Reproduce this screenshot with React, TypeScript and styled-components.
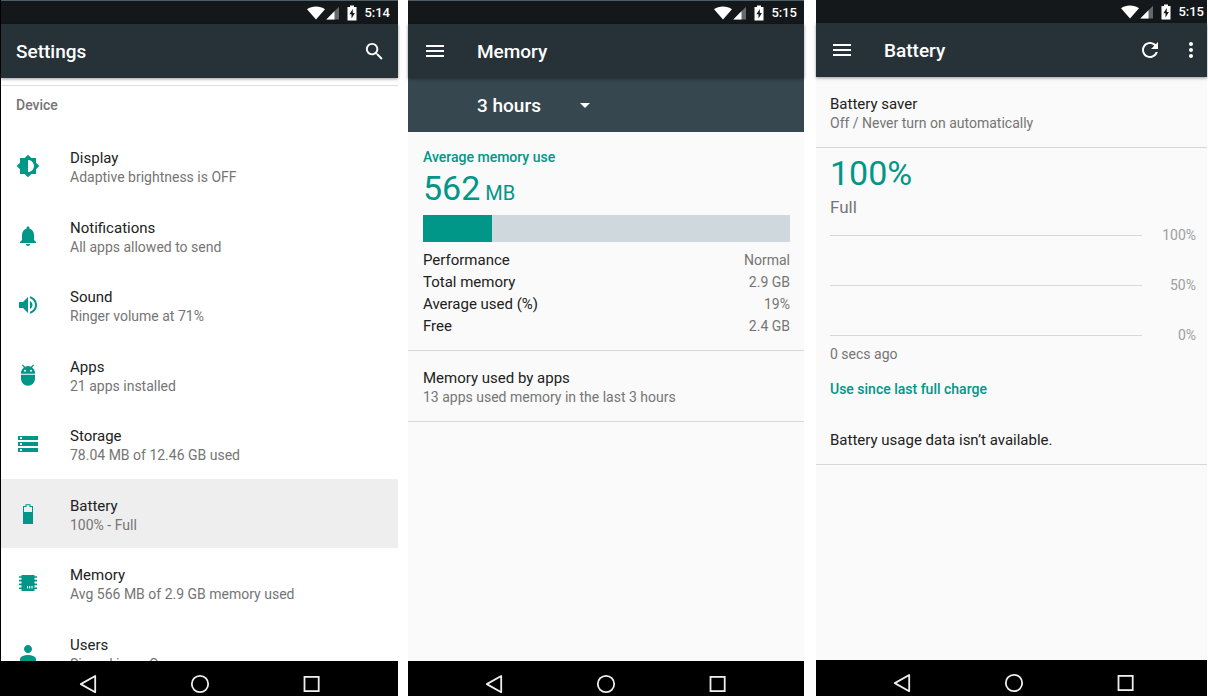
import React from "react";
import styled, { createGlobalStyle } from "styled-components";

const GlobalStyle = createGlobalStyle`
  * { box-sizing: border-box; }
  body {
    margin: 0;
    background: #fff;
    color: #212121;
    font-family: Roboto, "Liberation Sans", sans-serif;
  }
  h1, h2, p { margin: 0; }
`;

const TEAL = "#009688";

const Screens = styled.div`
  display: grid;
  grid-template-columns: 398fr 396fr 394fr;
  column-gap: 10px;
  height: 100vh;
`;

const Phone = styled.section<{ $surface: string }>`
  display: flex;
  flex-direction: column;
  min-width: 0;
  min-height: 0;
  background: ${(p) => p.$surface};
`;

const SettingsPhone = styled(Phone)`
  border-left: 1px solid #000;
`;

const BatteryPhone = styled(Phone)`
  margin: 0 1px 0 2px;
`;

const StatusBar = styled.div<{ $edge?: boolean; $right: number }>`
  display: flex;
  flex: none;
  align-items: center;
  justify-content: flex-end;
  height: ${(p) => (p.$edge ? 24 : 23)}px;
  padding-right: ${(p) => p.$right}px;
  border-top: ${(p) => (p.$edge ? "1px solid #4c5f69" : "none")};
  background: #14181b;
  color: #fff;
`;

const StatusIcon = styled.svg<{ $gap: number }>`
  flex: none;
  margin-right: ${(p) => p.$gap}px;
`;

const Clock = styled.time`
  padding-top: 1px;
  font-size: 13px;
  line-height: 16px;
  font-weight: 500;
`;

const Toolbar = styled.header<{ $left: number; $right: number }>`
  position: relative;
  display: flex;
  flex: none;
  align-items: center;
  height: 54px;
  padding: 0 ${(p) => p.$right}px 0 ${(p) => p.$left}px;
  background: #263238;
  color: #fff;
  box-shadow: 0 1px 3px rgba(0, 0, 0, 0.4);
`;

const Title = styled.h1<{ $indent?: boolean }>`
  flex: 1;
  margin-left: ${(p) => (p.$indent ? 30 : 0)}px;
  padding-top: 2px;
  font-size: 19px;
  line-height: 24px;
  font-weight: 500;
`;

const IconButton = styled.button<{ $gap?: number }>`
  display: flex;
  margin: 0 0 0 ${(p) => p.$gap ?? 0}px;
  padding: 0;
  border: 0;
  background: none;
  color: inherit;
`;

const Content = styled.main`
  flex: 1;
  min-height: 0;
  overflow: hidden;
`;

const NavBar = styled.nav<{ $shift?: boolean }>`
  display: flex;
  flex: none;
  justify-content: center;
  gap: 88px;
  padding: 11px 0 ${(p) => (p.$shift ? 1 : 0)}px ${(p) => (p.$shift ? 4 : 0)}px;
  background: #000;
  color: #eee;
`;

const SectionLabel = styled.h2`
  margin-top: 7px;
  padding: 9px 15px 16px;
  border-top: 1px solid #dcdcdc;
  color: #757575;
  font-size: 14px;
  line-height: 20px;
  font-weight: 500;
`;

const SettingsList = styled.ul`
  display: grid;
  grid-template-rows: repeat(4, 70px 69px);
  margin: 0;
  padding: 0;
  list-style: none;
`;

const SettingLink = styled.a<{ $selected?: boolean }>`
  display: flex;
  align-items: center;
  gap: 30px;
  height: 100%;
  padding: 0 15px;
  background: ${(p) => (p.$selected ? "#eee" : "transparent")};
  color: inherit;
  text-decoration: none;
`;

const SettingIcon = styled.svg`
  flex: none;
  fill: ${TEAL};
`;

const SettingText = styled.div`
  padding-top: 3px;
`;

const Primary = styled.p`
  font-size: 15px;
  line-height: 20px;
`;

const Secondary = styled.p`
  color: #757575;
  font-size: 14px;
  line-height: 19px;
`;

const PeriodBar = styled.div`
  display: flex;
  align-items: center;
  height: 54px;
  padding-left: 69px;
  background: #37474f;
  color: #fff;
`;

const PeriodField = styled.label`
  display: grid;
  grid-template-columns: 113px;
  align-items: center;
  > * { grid-area: 1 / 1; }
  svg { justify-self: end; pointer-events: none; }
`;

const PeriodSelect = styled.select`
  width: 100%;
  padding: 2px 0 0;
  border: 0;
  appearance: none;
  background: none;
  color: inherit;
  font-family: inherit;
  font-size: 19px;
  line-height: 24px;
  font-weight: 500;
`;

const Block = styled.section<{ $pad: string }>`
  padding: ${(p) => p.$pad};
  border-bottom: 1px solid #d8d8d8;
`;

const Accent = styled.h2`
  color: ${TEAL};
  font-size: 14px;
  line-height: 20px;
  font-weight: 500;
`;

const Figure = styled.p`
  color: ${TEAL};
  font-size: 34px;
  line-height: 40px;
`;

const Unit = styled.span`
  font-size: 20px;
  line-height: 20px;
`;

const Meter = styled.div`
  height: 27px;
  margin: 7px 0;
  background: #cfd8dc;
`;

const MeterFill = styled.div`
  height: 100%;
  background: ${TEAL};
`;

const Stats = styled.table`
  width: 100%;
  border-collapse: collapse;
  line-height: 22px;
  th { padding: 0; text-align: left; font-size: 15px; font-weight: 400; }
  td { padding: 0; text-align: right; font-size: 14px; color: #757575; }
`;

const ChargeState = styled.p`
  margin-top: 2px;
  color: #757575;
  font-size: 17px;
  line-height: 24px;
`;

const Chart = styled.div`
  margin-top: 6px;
`;

const ChartRow = styled.div`
  display: flex;
  align-items: center;
  height: 20px;
  color: #9e9e9e;
  font-size: 14px;
  & + & { margin-top: 30px; }
`;

const GridLine = styled.span`
  flex: 1;
  height: 1px;
  background: #d8d8d8;
`;

const GridLabel = styled.span`
  width: 54px;
  text-align: right;
`;

const Spaced = styled.div<{ $top: number }>`
  margin-top: ${(p) => p.$top}px;
`;

function Status({ time, edge, right }: { time: string; edge?: boolean; right: number }) {
  return (
    <StatusBar $edge={edge} $right={right}>
      <StatusIcon $gap={1} width="18" height="14" viewBox="0 0 18 14" fill="#fff">
        <path d="M0 3.2C2.600 1.200 5.600.4 9 .4s6.400.8 9 2.800L9 13.600Z" />
      </StatusIcon>
      <StatusIcon $gap={8} width="13" height="14" viewBox="0 0 13 14" fill="#fff">
        <path d="M13 .8V13.500H.3Z" opacity=".35" />
        <path d="M8.500 5.300V13.500H.3Z" />
      </StatusIcon>
      <StatusIcon $gap={7} width="10" height="16" viewBox="0 0 10 16" fill="#fff">
        <path
          fillRule="evenodd"
          d="M3 .5h4V2h2.500v13.500H.5V2H3ZM5.800 4 2.400 9.200h2.100v4.200l3.400-5.400H5.800Z"
        />
      </StatusIcon>
      <Clock>{time}</Clock>
    </StatusBar>
  );
}

function MenuButton() {
  return (
    <IconButton type="button" aria-label="Open menu">
      <svg width="24" height="24" viewBox="0 0 24 24" fill="currentColor">
        <path d="M3 18h18v-2H3v2zm0-5h18v-2H3v2zm0-7v2h18V6H3z" />
      </svg>
    </IconButton>
  );
}

function SystemNav({ shift }: { shift?: boolean }) {
  const line = { fill: "none", stroke: "currentColor", strokeWidth: 1.8 };
  return (
    <NavBar $shift={shift}>
      <IconButton type="button" aria-label="Back">
        <svg width="24" height="24" viewBox="0 0 24 24" {...line}>
          <path d="M19.200 4v16.200L4.800 12.100Z" strokeLinejoin="round" />
        </svg>
      </IconButton>
      <IconButton type="button" aria-label="Home">
        <svg width="24" height="24" viewBox="0 0 24 24" {...line}>
          <circle cx="12" cy="12" r="8.200" />
        </svg>
      </IconButton>
      <IconButton type="button" aria-label="Recent apps">
        <svg width="24" height="24" viewBox="0 0 24 24" {...line}>
          <rect x="4.500" y="4.900" width="14.200" height="14.200" />
        </svg>
      </IconButton>
    </NavBar>
  );
}

const settings: { title: string; detail: string; icon: string; selected?: boolean }[] = [
  {
    title: "Display",
    detail: "Adaptive brightness is OFF",
    icon: "M20 15.310L23.310 12 20 8.690V4h-4.690L12 .690 8.690 4H4v4.690L.690 12 4 15.310V20h4.690L12 23.310 15.310 20H20v-4.690zM12 18V6c3.310 0 6 2.690 6 6s-2.690 6-6 6z",
  },
  {
    title: "Notifications",
    detail: "All apps allowed to send",
    icon: "M12 22c1.100 0 2-.9 2-2h-4c0 1.100.9 2 2 2zm6-6v-5c0-3.070-1.640-5.640-4.500-6.320V4c0-.83-.67-1.500-1.500-1.500s-1.500.67-1.500 1.500v.68C7.630 5.360 6 7.920 6 11v5l-2 2v1h16v-1l-2-2z",
  },
  {
    title: "Sound",
    detail: "Ringer volume at 71%",
    icon: "M3 9v6h4l5 5V4L7 9H3zm13.500 3c0-1.770-1.020-3.290-2.500-4.030v8.050c1.480-.73 2.500-2.250 2.500-4.020zM14 3.230v2.060c2.890.86 5 3.540 5 6.710s-2.110 5.850-5 6.710v2.060c4.010-.91 7-4.490 7-8.770s-2.990-7.860-7-8.770z",
  },
  {
    title: "Apps",
    detail: "21 apps installed",
    icon: "M5 15.500c0 4.100 3.100 7.200 7 7.200s7-3.100 7-7.200V11.800H5zM16.100 4.400l2-2.200-.9-.8-2.300 2.300a7 7 0 0 0-5.800 0L6.800 1.400l-.9.800 2 2.200A7 7 0 0 0 5 10.200v.5h14v-.5a7 7 0 0 0-2.900-5.800zM9 8.800a1 1 0 1 1 0-2 1 1 0 0 1 0 2zm6 0a1 1 0 1 1 0-2 1 1 0 0 1 0 2z",
  },
  {
    title: "Storage",
    detail: "78.04 MB of 12.46 GB used",
    icon: "M2 20h20v-4H2v4zm2-3h2v2H4v-2zM2 4v4h20V4H2zm4 3H4V5h2v2zm-4 7h20v-4H2v4zm2-3h2v2H4v-2z",
  },
  {
    title: "Battery",
    detail: "100% - Full",
    selected: true,
    icon: "M9.500 2.200h5V4H17v18H7V4h2.500zM10.500 3.200V5H8v5h8V5h-2.500V3.200z",
  },
  {
    title: "Memory",
    detail: "Avg 566 MB of 2.9 GB memory used",
    icon: "M5.500 4h13v1.200H21v1.600h-2.500v2H21v1.600h-2.500v2.200H21v1.600h-2.500v2.200H21V18h-2.500v2h-13v-2H3v-1.600h2.500v-2.200H3v-1.600h2.500v-2.200H3V8.800h2.500v-2H3V5.200h2.500zM11 15v2.500h1V15zM13 15v2.500h1.200V15zM15.400 15v2.500h1.200V15z",
  },
  {
    title: "Users",
    detail: "Signed in as Owner",
    icon: "M12 12c2.210 0 4-1.790 4-4s-1.790-4-4-4-4 1.790-4 4 1.790 4 4 4zm0 2c-2.670 0-8 1.340-8 4v2h16v-2c0-2.660-5.330-4-8-4z",
  },
];

const memoryStats = [
  ["Performance", "Normal"],
  ["Total memory", "2.9 GB"],
  ["Average used (%)", "19%"],
  ["Free", "2.4 GB"],
];

export default function App() {
  return (
    <>
      <GlobalStyle />
      <Screens>
        <SettingsPhone $surface="#fff">
          <Status time="5:14" edge right={8} />
          <Toolbar $left={15} $right={12}>
            <Title>Settings</Title>
            <IconButton type="button" aria-label="Search">
              <svg width="23" height="23" viewBox="0 0 24 24" fill="currentColor">
                <path d="M15.500 14h-.79l-.28-.27C15.410 12.590 16 11.110 16 9.500 16 5.910 13.090 3 9.500 3S3 5.910 3 9.500 5.910 16 9.500 16c1.610 0 3.090-.59 4.230-1.570l.27.28v.79l5 4.990L20.490 19l-4.990-5zm-6 0C7.010 14 5 11.990 5 9.500S7.010 5 9.500 5 14 7.010 14 9.500 11.990 14 9.500 14z" />
              </svg>
            </IconButton>
          </Toolbar>
          <Content>
            <SectionLabel>Device</SectionLabel>
            <SettingsList>
              {settings.map((s) => (
                <li key={s.title}>
                  <SettingLink href="#" $selected={s.selected}>
                    <SettingIcon width="24" height="24" viewBox="0 0 24 24" fillRule="evenodd">
                      <path d={s.icon} />
                    </SettingIcon>
                    <SettingText>
                      <Primary>{s.title}</Primary>
                      <Secondary>{s.detail}</Secondary>
                    </SettingText>
                  </SettingLink>
                </li>
              ))}
            </SettingsList>
          </Content>
          <SystemNav />
        </SettingsPhone>

        <Phone $surface="#fafafa">
          <Status time="5:15" edge right={7} />
          <Toolbar $left={15} $right={12}>
            <MenuButton />
            <Title $indent>Memory</Title>
          </Toolbar>
          <Content>
            <PeriodBar>
              <PeriodField>
                <PeriodSelect aria-label="Time period" defaultValue="3 hours">
                  <option>3 hours</option>
                </PeriodSelect>
                <svg width="10" height="5" viewBox="0 0 10 5" fill="currentColor">
                  <path d="M0 0h10L5 5Z" />
                </svg>
              </PeriodField>
            </PeriodBar>
            <Block $pad="15px 14px 13px 15px">
              <Accent>Average memory use</Accent>
              <Spaced $top={1}>
                <Figure>
                  562<Unit> MB</Unit>
                </Figure>
              </Spaced>
              <Meter>
                <MeterFill style={{ width: "18.7%" }} />
              </Meter>
              <Stats>
                <tbody>
                  {memoryStats.map(([name, value]) => (
                    <tr key={name}>
                      <th scope="row">{name}</th>
                      <td>{value}</td>
                    </tr>
                  ))}
                </tbody>
              </Stats>
            </Block>
            <Block $pad="17px 15px 14px">
              <Primary>Memory used by apps</Primary>
              <Secondary>13 apps used memory in the last 3 hours</Secondary>
            </Block>
          </Content>
          <SystemNav />
        </Phone>

        <BatteryPhone $surface="#fafafa">
          <Status time="5:15" right={3} />
          <Toolbar $left={14} $right={4}>
            <MenuButton />
            <Title $indent>Battery</Title>
            <IconButton type="button" aria-label="Refresh">
              <svg width="24" height="24" viewBox="0 0 24 24" fill="currentColor">
                <path d="M17.650 6.350C16.200 4.900 14.210 4 12 4c-4.420 0-7.990 3.580-7.990 8s3.570 8 7.990 8c3.730 0 6.840-2.550 7.730-6h-2.080c-.82 2.330-3.040 4-5.650 4-3.310 0-6-2.690-6-6s2.690-6 6-6c1.660 0 3.140.69 4.220 1.780L13 11h7V4l-2.350 2.350z" />
              </svg>
            </IconButton>
            <IconButton type="button" aria-label="More options" $gap={17}>
              <svg width="24" height="24" viewBox="0 0 24 24" fill="currentColor">
                <path d="M12 8c1.100 0 2-.9 2-2s-.9-2-2-2-2 .9-2 2 .9 2 2 2zm0 2c-1.100 0-2 .9-2 2s.9 2 2 2 2-.9 2-2-.9-2-2-2zm0 6c-1.100 0-2 .9-2 2s.9 2 2 2 2-.9 2-2-.9-2-2-2z" />
              </svg>
            </IconButton>
          </Toolbar>
          <Content>
            <Block $pad="17px 14px 14px">
              <Primary>Battery saver</Primary>
              <Secondary>Off / Never turn on automatically</Secondary>
            </Block>
            <Block $pad="5px 11px 14px 14px">
              <Figure>100%</Figure>
              <ChargeState>Full</ChargeState>
              <Chart>
                {["100%", "50%", "0%"].map((label) => (
                  <ChartRow key={label}>
                    <GridLine />
                    <GridLabel>{label}</GridLabel>
                  </ChartRow>
                ))}
              </Chart>
              <Secondary>0 secs ago</Secondary>
              <Spaced $top={15}>
                <Accent>Use since last full charge</Accent>
              </Spaced>
              <Spaced $top={31}>
                <Primary>Battery usage data isn’t available.</Primary>
              </Spaced>
            </Block>
          </Content>
          <SystemNav shift />
        </BatteryPhone>
      </Screens>
    </>
  );
}
